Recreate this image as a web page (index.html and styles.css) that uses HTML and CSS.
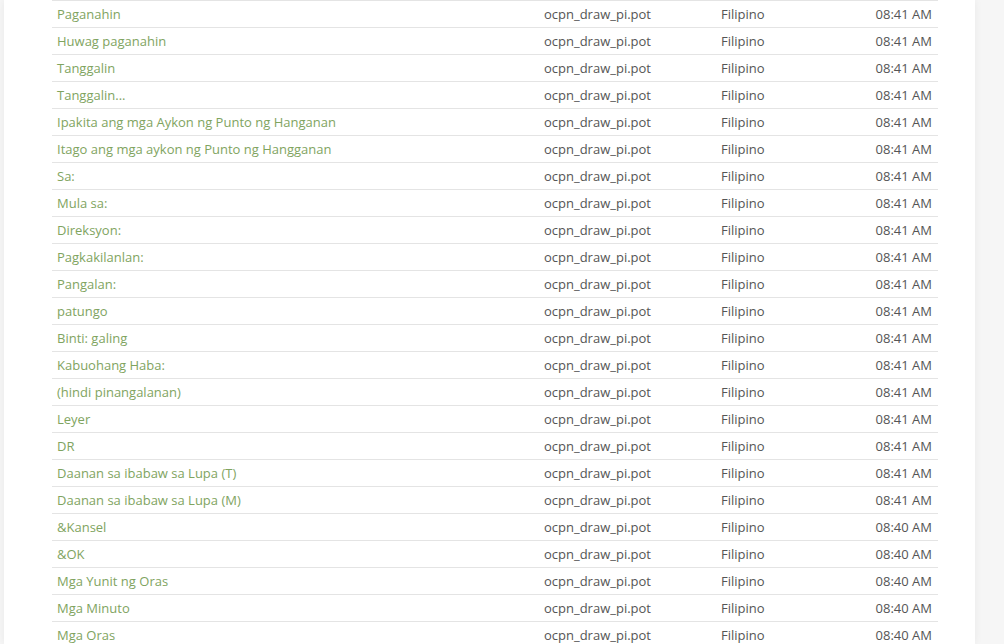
FILE: index.html
```html
<!DOCTYPE html>
<html>
<head>
<meta charset="utf-8">
<link rel="stylesheet" href="styles.css">
</head>
<body>
<div class="panel">
<table class="list">
<tbody>
<tr><td class="src"><a href="#">Paganahin</a></td><td class="file">ocpn_draw_pi.pot</td><td class="lang">Filipino</td><td class="time">08:41 AM</td></tr>
<tr><td class="src"><a href="#">Huwag paganahin</a></td><td class="file">ocpn_draw_pi.pot</td><td class="lang">Filipino</td><td class="time">08:41 AM</td></tr>
<tr><td class="src"><a href="#">Tanggalin</a></td><td class="file">ocpn_draw_pi.pot</td><td class="lang">Filipino</td><td class="time">08:41 AM</td></tr>
<tr><td class="src"><a href="#">Tanggalin...</a></td><td class="file">ocpn_draw_pi.pot</td><td class="lang">Filipino</td><td class="time">08:41 AM</td></tr>
<tr><td class="src"><a href="#">Ipakita ang mga Aykon ng Punto ng Hanganan</a></td><td class="file">ocpn_draw_pi.pot</td><td class="lang">Filipino</td><td class="time">08:41 AM</td></tr>
<tr><td class="src"><a href="#">Itago ang mga aykon ng Punto ng Hangganan</a></td><td class="file">ocpn_draw_pi.pot</td><td class="lang">Filipino</td><td class="time">08:41 AM</td></tr>
<tr><td class="src"><a href="#">Sa:</a></td><td class="file">ocpn_draw_pi.pot</td><td class="lang">Filipino</td><td class="time">08:41 AM</td></tr>
<tr><td class="src"><a href="#">Mula sa:</a></td><td class="file">ocpn_draw_pi.pot</td><td class="lang">Filipino</td><td class="time">08:41 AM</td></tr>
<tr><td class="src"><a href="#">Direksyon:</a></td><td class="file">ocpn_draw_pi.pot</td><td class="lang">Filipino</td><td class="time">08:41 AM</td></tr>
<tr><td class="src"><a href="#">Pagkakilanlan:</a></td><td class="file">ocpn_draw_pi.pot</td><td class="lang">Filipino</td><td class="time">08:41 AM</td></tr>
<tr><td class="src"><a href="#">Pangalan:</a></td><td class="file">ocpn_draw_pi.pot</td><td class="lang">Filipino</td><td class="time">08:41 AM</td></tr>
<tr><td class="src"><a href="#">patungo</a></td><td class="file">ocpn_draw_pi.pot</td><td class="lang">Filipino</td><td class="time">08:41 AM</td></tr>
<tr><td class="src"><a href="#">Binti: galing</a></td><td class="file">ocpn_draw_pi.pot</td><td class="lang">Filipino</td><td class="time">08:41 AM</td></tr>
<tr><td class="src"><a href="#">Kabuohang Haba:</a></td><td class="file">ocpn_draw_pi.pot</td><td class="lang">Filipino</td><td class="time">08:41 AM</td></tr>
<tr><td class="src"><a href="#">(hindi pinangalanan)</a></td><td class="file">ocpn_draw_pi.pot</td><td class="lang">Filipino</td><td class="time">08:41 AM</td></tr>
<tr><td class="src"><a href="#">Leyer</a></td><td class="file">ocpn_draw_pi.pot</td><td class="lang">Filipino</td><td class="time">08:41 AM</td></tr>
<tr><td class="src"><a href="#">DR</a></td><td class="file">ocpn_draw_pi.pot</td><td class="lang">Filipino</td><td class="time">08:41 AM</td></tr>
<tr><td class="src"><a href="#">Daanan sa ibabaw sa Lupa (T)</a></td><td class="file">ocpn_draw_pi.pot</td><td class="lang">Filipino</td><td class="time">08:41 AM</td></tr>
<tr><td class="src"><a href="#">Daanan sa ibabaw sa Lupa (M)</a></td><td class="file">ocpn_draw_pi.pot</td><td class="lang">Filipino</td><td class="time">08:41 AM</td></tr>
<tr><td class="src"><a href="#">&amp;Kansel</a></td><td class="file">ocpn_draw_pi.pot</td><td class="lang">Filipino</td><td class="time">08:40 AM</td></tr>
<tr><td class="src"><a href="#">&amp;OK</a></td><td class="file">ocpn_draw_pi.pot</td><td class="lang">Filipino</td><td class="time">08:40 AM</td></tr>
<tr><td class="src"><a href="#">Mga Yunit ng Oras</a></td><td class="file">ocpn_draw_pi.pot</td><td class="lang">Filipino</td><td class="time">08:40 AM</td></tr>
<tr><td class="src"><a href="#">Mga Minuto</a></td><td class="file">ocpn_draw_pi.pot</td><td class="lang">Filipino</td><td class="time">08:40 AM</td></tr>
<tr><td class="src"><a href="#">Mga Oras</a></td><td class="file">ocpn_draw_pi.pot</td><td class="lang">Filipino</td><td class="time">08:40 AM</td></tr>
</tbody>
</table>
</div>
</body>
</html>
```
FILE: styles.css
```css
html, body {
  margin: 0;
  padding: 0;
  background: #f6f6f6;
  height: 644px;
  overflow: hidden;
}
body {
  font-family: "Open Sans", "DejaVu Sans", sans-serif;
  font-size: 13px;
  color: #555;
}
.panel {
  margin-left: 4px;
  width: 971px;
  height: 644px;
  overflow: hidden;
  background: #fff;
  box-shadow: 0 0 8px rgba(0,0,0,0.06);
  padding: 0 37px 0 48px;
  box-sizing: border-box;
}
.list {
  width: 886px;
  border-collapse: collapse;
  table-layout: fixed;
}
.list td {
  height: 26px;
  padding: 0 5px;
  border-top: 1px solid #e4e4e4;
  vertical-align: middle;
  white-space: nowrap;
  line-height: 18px;
}
.list td.src { width: 477px; }
.list td.file { width: 167px; }
.list td.lang { width: 120px; }
.list td.time { text-align: right; padding-right: 6px; }
.list a {
  color: #7fa45f;
  text-decoration: none;
}
```
